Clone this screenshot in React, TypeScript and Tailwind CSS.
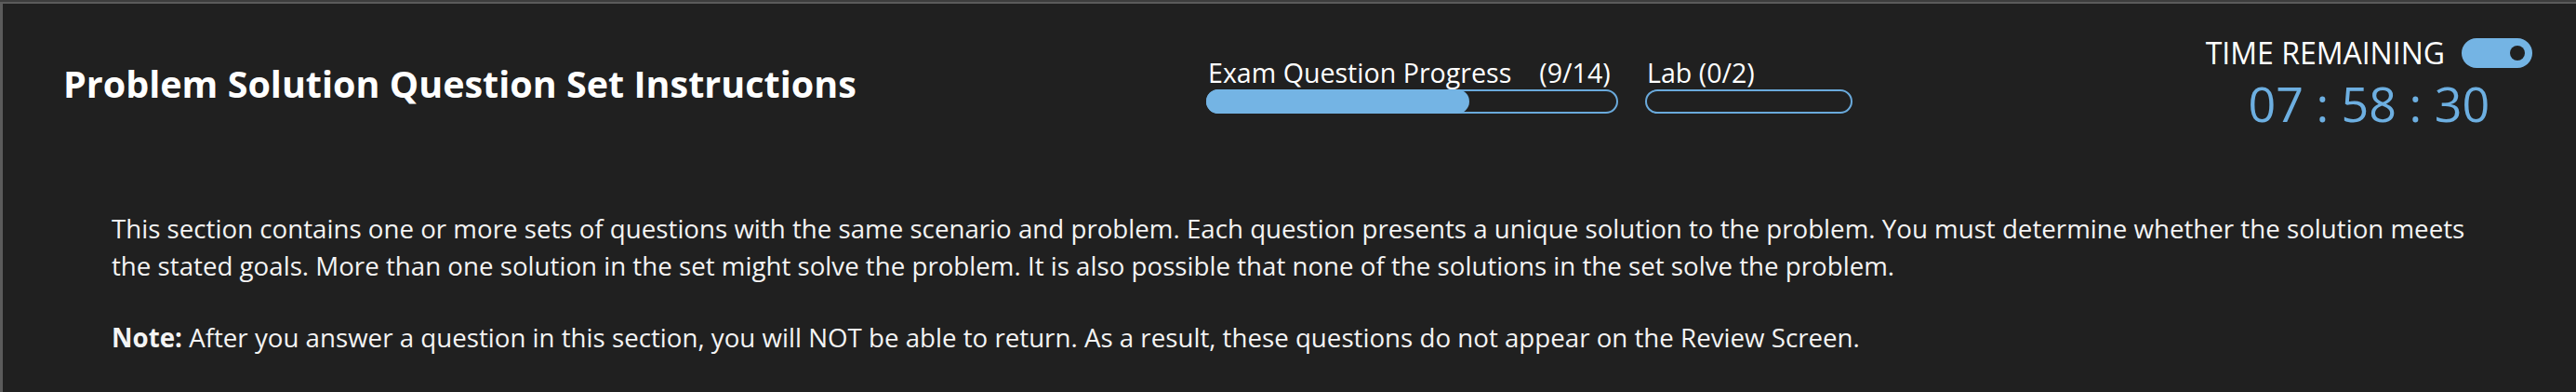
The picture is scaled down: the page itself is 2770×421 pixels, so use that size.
import React from "react";

const font = "font-['Open_Sans',sans-serif]";

function ProgressBar({ width, filled }: { width: string; filled: number }) {
  return (
    <div className={`relative ${width} h-[26px] rounded-full border-2 border-[#6aaadc]`}>
      {filled > 0 && (
        <div
          className="absolute -left-[2px] -top-[2px] -bottom-[2px] rounded-full bg-[#74b4e4]"
          style={{ width: `${filled * 100}%` }}
        />
      )}
    </div>
  );
}

function Header() {
  return (
    <div className="flex items-start pl-[65px] pr-[47px]">
      <div className="w-[1229px] shrink-0 pt-[65.5px]">
        <h1 className="text-[39.5px] leading-[40px] font-bold text-white">
          Problem Solution Question Set Instructions
        </h1>
      </div>

      <div className="flex gap-[29px] pt-[60px]">
        <div className="flex flex-col gap-[4px]">
          <div className="flex pl-[2px] text-[28.6px] leading-[28px] text-white">
            <span>Exam Question Progress</span>
            <span className="ml-[30px]">(9/14)</span>
          </div>
          <ProgressBar width="w-[443px]" filled={0.645} />
        </div>
        <div className="flex flex-col gap-[4px]">
          <div className="pl-[2px] text-[28.6px] leading-[28px] text-white">Lab (0/2)</div>
          <ProgressBar width="w-[223px]" filled={0} />
        </div>
      </div>

      <div className="ml-auto flex flex-col items-center pt-[37px]">
        <div className="flex items-center gap-[18px]">
          <span className="text-[32px] leading-[32px] text-white">TIME REMAINING</span>
          <div className="flex h-[32px] w-[76px] items-center justify-end rounded-full bg-[#74b4e4] pr-[8px]">
            <div className="h-[16px] w-[16px] rounded-full bg-[#202020]" />
          </div>
        </div>
        <div className="mt-[12px] text-[52px] leading-[52px] text-[#6dafe1]">07 : 58 : 30</div>
      </div>
    </div>
  );
}

export default function App() {
  return (
    <div className={`h-[421px] w-full overflow-hidden border-t-2 border-[#3d3d3d] bg-[#202020] ${font}`}>
      <div className="h-full border-t-2 border-l-[3px] border-[#5b5b5b]">
        <Header />
        <div className="mt-[89px] pl-[117px] pr-[100px] text-[27.7px] leading-[39.5px] text-[#f4f4f4]">
          <p>
            This section contains one or more sets of questions with the same scenario and problem. Each question
            presents a unique solution to the problem. You must determine whether the solution meets the stated goals.
            More than one solution in the set might solve the problem. It is also possible that none of the solutions in
            the set solve the problem.
          </p>
          <p className="mt-[38px]">
            <span className="font-bold">Note:</span> After you answer a question in this section, you will NOT be able
            to return. As a result, these questions do not appear on the Review Screen.
          </p>
        </div>
      </div>
    </div>
  );
}
